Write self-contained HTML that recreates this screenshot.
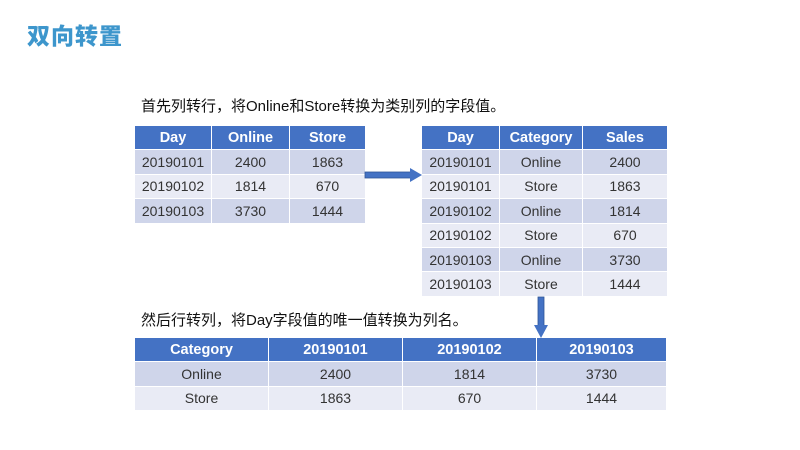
<!DOCTYPE html>
<html><head><meta charset="utf-8"><style>
body{margin:0;width:800px;height:450px;background:#fff;position:relative;overflow:hidden;font-family:"Liberation Sans","Noto Sans CJK SC",sans-serif;}
.t{position:absolute;}
.title{left:27px;top:17px;font-size:23px;font-weight:900;color:#3d96cc;letter-spacing:1px;}
.txt{font-size:15px;color:#111;white-space:nowrap;}
table{position:absolute;border-collapse:collapse;font-size:14px;color:#333;}
td,th{border:1.5px solid #fff;text-align:center;padding:0;height:23.4px;}
th{background:#4472c4;color:#fff;font-weight:bold;font-size:14.5px;}
tr.a td{background:#cfd5ea;}
tr.b td{background:#e9ebf5;}
</style></head><body>
<div class="t title">双向转置</div>
<div class="t txt" style="left:141px;top:95px;">首先列转行，将Online和Store转换为类别列的字段值。</div>
<div class="t txt" style="left:141px;top:309px;">然后行转列，将Day字段值的唯一值转换为列名。</div>
<table style="left:134px;top:125px;width:232px;">
<tr><th style="width:76px">Day</th><th style="width:77px">Online</th><th>Store</th></tr>
<tr class="a"><td>20190101</td><td>2400</td><td>1863</td></tr>
<tr class="b"><td>20190102</td><td>1814</td><td>670</td></tr>
<tr class="a"><td>20190103</td><td>3730</td><td>1444</td></tr>
</table>
<table style="left:421px;top:125px;width:247px;">
<tr><th style="width:77px">Day</th><th style="width:82px">Category</th><th>Sales</th></tr>
<tr class="a"><td>20190101</td><td>Online</td><td>2400</td></tr>
<tr class="b"><td>20190101</td><td>Store</td><td>1863</td></tr>
<tr class="a"><td>20190102</td><td>Online</td><td>1814</td></tr>
<tr class="b"><td>20190102</td><td>Store</td><td>670</td></tr>
<tr class="a"><td>20190103</td><td>Online</td><td>3730</td></tr>
<tr class="b"><td>20190103</td><td>Store</td><td>1444</td></tr>
</table>
<table style="left:134px;top:337px;width:533px;">
<tr><th style="width:133px">Category</th><th style="width:133px">20190101</th><th style="width:133px">20190102</th><th>20190103</th></tr>
<tr class="a"><td>Online</td><td>2400</td><td>1814</td><td>3730</td></tr>
<tr class="b"><td>Store</td><td>1863</td><td>670</td><td>1444</td></tr>
</table>
<svg class="t" style="left:0;top:0" width="800" height="450">
<rect x="365" y="172" width="46" height="6" fill="#4472c4" stroke="#2f5597" stroke-width="0.8"/>
<polygon points="410,168 422,175 410,182" fill="#4472c4"/>
<rect x="538" y="297" width="6" height="29" fill="#4472c4" stroke="#2f5597" stroke-width="0.8"/>
<polygon points="534,325 548,325 541,338" fill="#4472c4"/>
</svg>
</body></html>
